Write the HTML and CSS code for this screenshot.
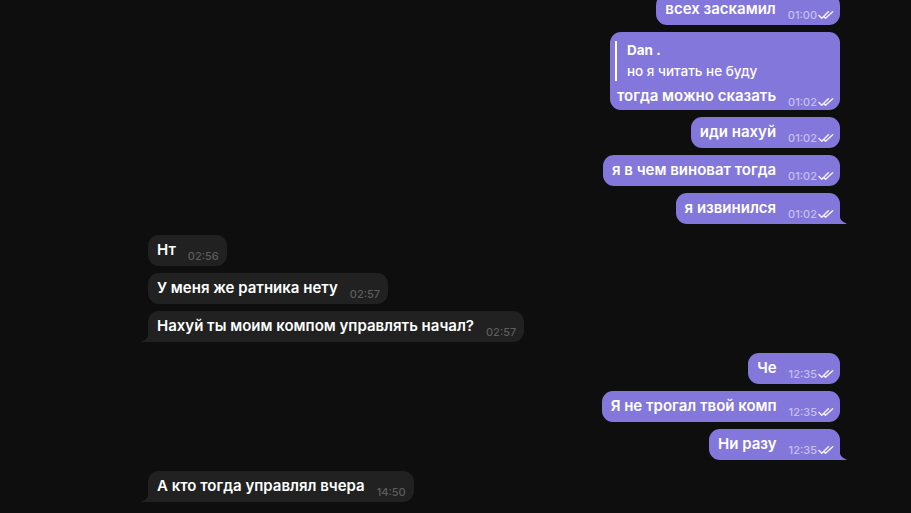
FILE: index.html
```html
<!DOCTYPE html>
<html lang="ru">
<head>
<meta charset="utf-8">
<link rel="stylesheet" href="styles.css">
</head>
<body>
<div class="chat">
  <div class="msgs">
    <div class="group out">
      <div class="bubble"><span class="text">всех заскамил</span><span class="meta">01:00<svg class="ticks" viewBox="0 0 18 10"><path d="M1 5.5l3 3L11 1.5M8 8.5L15.5 1.5M6.5 7l1.5 1.5" fill="none" stroke="currentColor" stroke-width="1.6" stroke-linecap="round" stroke-linejoin="round"/></svg></span></div>
      <div class="bubble reply-bubble">
        <div class="reply"><div class="reply-name">Dan .</div><div class="reply-text">но я читать не буду</div></div>
        <div class="line"><span class="text">тогда можно сказать</span><span class="meta">01:02<svg class="ticks" viewBox="0 0 18 10"><path d="M1 5.5l3 3L11 1.5M8 8.5L15.5 1.5M6.5 7l1.5 1.5" fill="none" stroke="currentColor" stroke-width="1.6" stroke-linecap="round" stroke-linejoin="round"/></svg></span></div>
      </div>
      <div class="bubble"><span class="text">иди нахуй</span><span class="meta">01:02<svg class="ticks" viewBox="0 0 18 10"><path d="M1 5.5l3 3L11 1.5M8 8.5L15.5 1.5M6.5 7l1.5 1.5" fill="none" stroke="currentColor" stroke-width="1.6" stroke-linecap="round" stroke-linejoin="round"/></svg></span></div>
      <div class="bubble"><span class="text">я в чем виноват тогда</span><span class="meta">01:02<svg class="ticks" viewBox="0 0 18 10"><path d="M1 5.5l3 3L11 1.5M8 8.5L15.5 1.5M6.5 7l1.5 1.5" fill="none" stroke="currentColor" stroke-width="1.6" stroke-linecap="round" stroke-linejoin="round"/></svg></span></div>
      <div class="bubble last"><span class="text">я извинился</span><span class="meta">01:02<svg class="ticks" viewBox="0 0 18 10"><path d="M1 5.5l3 3L11 1.5M8 8.5L15.5 1.5M6.5 7l1.5 1.5" fill="none" stroke="currentColor" stroke-width="1.6" stroke-linecap="round" stroke-linejoin="round"/></svg></span><svg class="tail" viewBox="0 0 8 12"><path d="M0 0C0 6 2.5 10 7 11.2C7.8 11.4 7.6 12 7 12H0Z" fill="currentColor"/></svg></div>
    </div>

    <div class="group in">
      <div class="bubble"><span class="text">Нт</span><span class="meta">02:56</span></div>
      <div class="bubble"><span class="text">У меня же ратника нету</span><span class="meta">02:57</span></div>
      <div class="bubble last"><span class="text">Нахуй ты моим компом управлять начал?</span><span class="meta">02:57</span><svg class="tail" viewBox="0 0 8 12"><path d="M8 0C8 6 5.5 10 1 11.2C0.2 11.4 0.4 12 1 12H8Z" fill="currentColor"/></svg></div>
    </div>

    <div class="group out">
      <div class="bubble"><span class="text">Че</span><span class="meta">12:35<svg class="ticks" viewBox="0 0 18 10"><path d="M1 5.5l3 3L11 1.5M8 8.5L15.5 1.5M6.5 7l1.5 1.5" fill="none" stroke="currentColor" stroke-width="1.6" stroke-linecap="round" stroke-linejoin="round"/></svg></span></div>
      <div class="bubble"><span class="text">Я не трогал твой комп</span><span class="meta">12:35<svg class="ticks" viewBox="0 0 18 10"><path d="M1 5.5l3 3L11 1.5M8 8.5L15.5 1.5M6.5 7l1.5 1.5" fill="none" stroke="currentColor" stroke-width="1.6" stroke-linecap="round" stroke-linejoin="round"/></svg></span></div>
      <div class="bubble last"><span class="text">Ни разу</span><span class="meta">12:35<svg class="ticks" viewBox="0 0 18 10"><path d="M1 5.5l3 3L11 1.5M8 8.5L15.5 1.5M6.5 7l1.5 1.5" fill="none" stroke="currentColor" stroke-width="1.6" stroke-linecap="round" stroke-linejoin="round"/></svg></span><svg class="tail" viewBox="0 0 8 12"><path d="M0 0C0 6 2.5 10 7 11.2C7.8 11.4 7.6 12 7 12H0Z" fill="currentColor"/></svg></div>
    </div>

    <div class="group in">
      <div class="bubble last"><span class="text">А кто тогда управлял вчера</span><span class="meta">14:50</span><svg class="tail" viewBox="0 0 8 12"><path d="M8 0C8 6 5.5 10 1 11.2C0.2 11.4 0.4 12 1 12H8Z" fill="currentColor"/></svg></div>
    </div>
  </div>
  <div class="divider"></div>
</div>
</body>
</html>
```

FILE: styles.css
```css
html, body {
  margin: 0;
  padding: 0;
  background: #0e0e0e;
  height: 100%;
  overflow: hidden;
}

body {
  font-family: Inter, "Noto Sans", sans-serif;
  color: #fff;
}

.chat {
  width: 911px;
  height: 513px;
  display: flex;
  flex-direction: column;
  justify-content: flex-end;
}

.msgs {
  display: flex;
  flex-direction: column;
  gap: 11px;
  padding: 0 71px 0 148px;
}

.group {
  display: flex;
  flex-direction: column;
  gap: 7px;
}

.group.out { align-items: flex-end; }
.group.in { align-items: flex-start; }

.bubble {
  position: relative;
  display: flex;
  align-items: flex-end;
  box-sizing: border-box;
  min-height: 31px;
  padding: 5px 5px 6px 9px;
  border-radius: 11px;
  font-size: 15px;
  font-weight: 600;
  line-height: 20px;
}

.out .bubble {
  background: #8477db;
  color: #fff;
}

.in .bubble {
  background: #212121;
  color: #fff;
}

.out .bubble.last { border-bottom-right-radius: 0; }
.in .bubble.last { border-bottom-left-radius: 0; }

.text {
  white-space: nowrap;
}

.meta {
  display: flex;
  align-items: center;
  margin-left: 12px;
  font-size: 11px;
  font-weight: 500;
  line-height: 12px;
  position: relative;
  top: 2px;
}

.out .meta { color: rgba(255, 255, 255, 0.55); }
.in .meta { color: #5d5d5d; margin-right: 3px; }

.ticks {
  width: 17px;
  height: 10px;
  margin-left: 1px;
  color: #f2f0ff;
}

.tail {
  position: absolute;
  bottom: 0;
  width: 8px;
  height: 12px;
}

.out .tail { right: -7px; color: #8477db; }
.in .tail { left: -7px; color: #212121; }

.reply-bubble {
  flex-direction: column;
  align-items: stretch;
  padding: 9px 5px 4px 7px;
}

.reply {
  display: flex;
  flex-direction: column;
  gap: 2px;
  border-left: 2px solid #fff;
  padding: 0 0 0 10px;
  margin: 0 0 5px -2px;
  font-size: 13.5px;
  line-height: 19px;
}

.reply-name { font-weight: 700; }
.reply-text { font-weight: 500; }

.line {
  display: flex;
  align-items: flex-end;
  justify-content: space-between;
}

.divider {
  height: 1px;
  margin: 7px 50px 4px 140px;
  background: linear-gradient(90deg, #3a3a3a, #5a5a5a 20%, #5a5a5a 75%, #1a1a1a);
}
```
